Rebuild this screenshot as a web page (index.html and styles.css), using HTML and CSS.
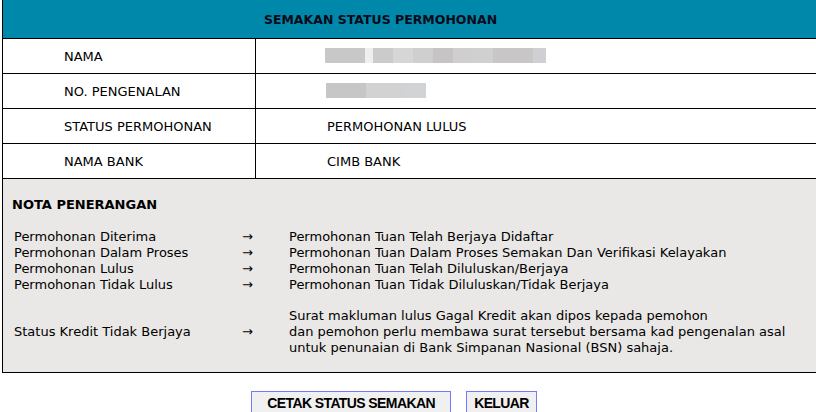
FILE: index.html
```html
<!DOCTYPE html>
<html>
  <head>
    <title>Semakan Status Permohonan</title>
    <link rel="stylesheet" href="styles.css">
  </head>
  <body>
    <div class="panel">
      <div class="panel-header">SEMAKAN STATUS PERMOHONAN</div>

      <div class="info-row">
        <div class="info-label">NAMA</div>
        <div class="info-value"><span class="masked masked-name"></span></div>
      </div>
      <div class="info-row">
        <div class="info-label">NO. PENGENALAN</div>
        <div class="info-value"><span class="masked masked-id"></span></div>
      </div>
      <div class="info-row">
        <div class="info-label">STATUS PERMOHONAN</div>
        <div class="info-value">PERMOHONAN LULUS</div>
      </div>
      <div class="info-row">
        <div class="info-label">NAMA BANK</div>
        <div class="info-value">CIMB BANK</div>
      </div>

      <div class="notes">
        <h2>NOTA PENERANGAN</h2>
        <div class="note-list">
          <div class="note-item">
            <span>Permohonan Diterima</span>
            <span class="arrow">&rarr;</span>
            <span>Permohonan Tuan Telah Berjaya Didaftar</span>
          </div>
          <div class="note-item">
            <span>Permohonan Dalam Proses</span>
            <span class="arrow">&rarr;</span>
            <span>Permohonan Tuan Dalam Proses Semakan Dan Verifikasi Kelayakan</span>
          </div>
          <div class="note-item">
            <span>Permohonan Lulus</span>
            <span class="arrow">&rarr;</span>
            <span>Permohonan Tuan Telah Diluluskan/Berjaya</span>
          </div>
          <div class="note-item">
            <span>Permohonan Tidak Lulus</span>
            <span class="arrow">&rarr;</span>
            <span>Permohonan Tuan Tidak Diluluskan/Tidak Berjaya</span>
          </div>
        </div>
        <div class="note-item note-long">
          <span>Status Kredit Tidak Berjaya</span>
          <span class="arrow">&rarr;</span>
          <span>Surat makluman lulus Gagal Kredit akan dipos kepada pemohon<br>
            dan pemohon perlu membawa surat tersebut bersama kad pengenalan asal<br>
            untuk penunaian di Bank Simpanan Nasional (BSN) sahaja.</span>
        </div>
      </div>
    </div>

    <div class="actions">
      <button type="button" class="btn btn-print">CETAK STATUS SEMAKAN</button>
      <button type="button" class="btn">KELUAR</button>
    </div>
  </body>
</html>
```

FILE: styles.css
```css
body {
  margin: 0;
  padding-left: 2px;
  font-family: "DejaVu Sans", Verdana, sans-serif;
  font-size: 13px;
  color: #000;
  background-color: #fff;
  overflow: hidden;
}
.panel {
  border-left: 1px solid #000;
}
.panel-header {
  height: 38px;
  line-height: 40px;
  padding-right: 58px;
  background-color: #0088aa;
  border-bottom: 1px solid #000;
  text-align: center;
  font-weight: bold;
  font-size: 12.5px;
  color: #0a0a1a;
}
.info-row {
  display: grid;
  grid-template-columns: 253px 1fr;
  height: 34px;
  border-bottom: 1px solid #000;
}
.info-label {
  display: flex;
  align-items: center;
  padding-left: 61px;
  border-right: 1px solid #000;
}
.info-value {
  display: flex;
  align-items: center;
  padding-left: 71px;
}
.masked {
  display: inline-block;
  height: 15px;
  margin-left: -2px;
}
.masked-name {
  width: 221px;
  margin-top: -1px;
  background: linear-gradient(to right,
    #c8c8c8 0 40px, #efefef 40px 48px, #cbcbcb 48px 68px, #d6d6d6 68px 88px,
    #cfcfcf 88px 108px, #c6c4c4 108px 128px, #d0cece 128px 148px,
    #cfd0cf 148px 168px, #c8c6c6 168px 208px, #d0d0d4 208px 221px);
}
.masked-id {
  width: 100px;
  margin-left: -1px;
  margin-top: -1px;
  background: linear-gradient(to right,
    #c6c6c6 0 40px, #d2d2d2 40px 80px, #d2d3d5 80px 100px);
}
.notes {
  background-color: #e9e8e6;
  border-bottom: 1px solid #000;
  padding: 18px 0 16px 9px;
}
.notes h2 {
  margin: 0 0 16px;
  font-size: 13px;
  line-height: 16px;
}
.note-item {
  display: grid;
  grid-template-columns: 228px 47px 1fr;
  line-height: 16px;
  padding-left: 2px;
}
.note-long {
  align-items: center;
  margin-top: 15px;
}
.arrow {
  font-size: 13px;
}
.actions {
  display: flex;
  justify-content: center;
  gap: 15px;
  padding-right: 30px;
  margin-top: 18px;
}
.btn {
  font-family: "Liberation Sans", Arial, sans-serif;
  font-weight: bold;
  font-size: 14px;
  letter-spacing: -0.6px;
  line-height: 16px;
  padding: 3px 7px 6px;
  background-color: #f0f0f0;
  border: 1px solid #7878ff;
  color: #000;
}
.btn-print {
  width: 200px;
}
```
